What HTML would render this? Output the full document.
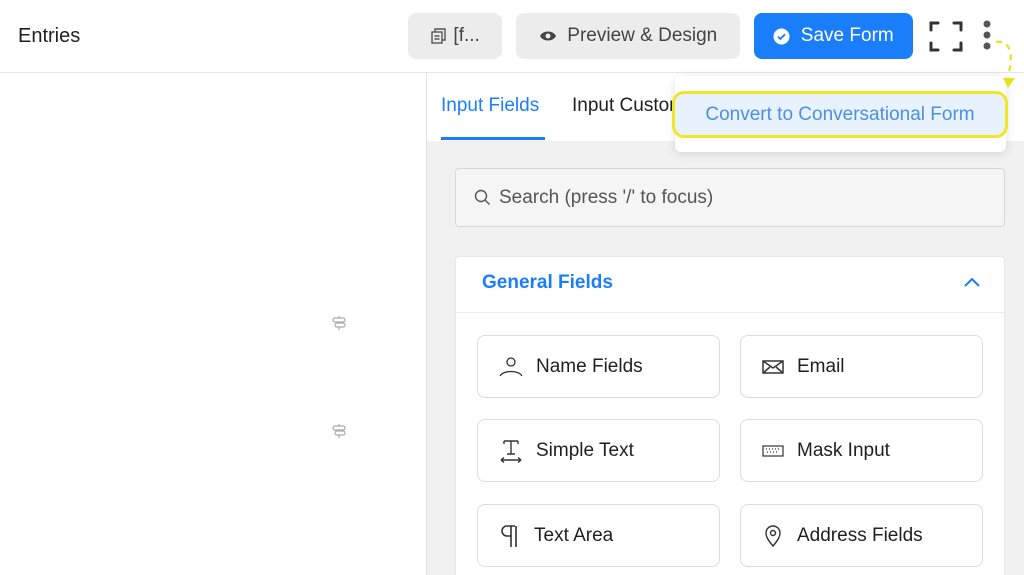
<!DOCTYPE html>
<html><head><style>
*{box-sizing:border-box;margin:0;padding:0}
html,body{width:1024px;height:575px;overflow:hidden}
body{font-family:"Liberation Sans",sans-serif;background:#fff;position:relative;color:#1e1f21}
.a{position:absolute}
.hb{position:absolute;top:13px;height:46px;border-radius:8px;background:#ececec;display:flex;align-items:center;justify-content:center;font-size:19px;color:#444}
.card{position:absolute;width:243px;height:63px;border:1px solid #dcdcdc;border-radius:8px;background:#fff;display:flex;align-items:center;font-size:19px;color:#1e1f21}
.card svg{margin-left:21px;margin-right:13px}
</style></head><body>
<div class="a" style="left:18px;top:25px;font-size:20px;color:#1e1f21">Entries</div>
<div class="hb" style="left:408px;width:94px"><svg width="18" height="18" viewBox="0 0 18 18" fill="none" stroke="#555" stroke-width="1.4"><rect x="2" y="5" width="10" height="11"/><path d="M5 5V2h10v11h-3M4.5 9h5M4.5 12h5"/></svg>&nbsp;[f...</div>
<div class="hb" style="left:516px;width:224px"><svg width="18" height="14" viewBox="0 0 18 14"><path d="M1 7C4 1 14 1 17 7C14 13 4 13 1 7Z" fill="#444"/><circle cx="9" cy="7" r="2.5" fill="#ececec"/></svg>&nbsp;&nbsp;Preview &amp; Design</div>
<div class="hb" style="left:754px;width:159px;background:#1a7efb;color:#fff"><svg width="17" height="17" viewBox="0 0 17 17"><circle cx="8.5" cy="8.5" r="8" fill="#fff"/><path d="M5 8.7l2.4 2.3 4.6-4.8" stroke="#1a7efb" stroke-width="1.8" fill="none"/></svg>&nbsp;&nbsp;Save Form</div>
<svg class="a" style="left:929px;top:20px" width="34" height="33" viewBox="0 0 34 33" fill="none" stroke="#333" stroke-width="3" stroke-linecap="round"><path d="M2 10V3h7M25 3h7v7M32 23v7h-7M9 30H2v-7"/></svg>
<div class="a" style="left:0;top:72px;width:1024px;height:1px;background:#e6e6e6"></div>
<div class="a" style="left:426px;top:73px;width:1px;height:502px;background:#e2e2e2"></div>
<div class="a" style="left:427px;top:73px;width:597px;height:502px;background:#f1f1f1"></div>
<div class="a" style="left:427px;top:73px;width:597px;height:68px;background:#fff"></div>
<div class="a" style="left:441px;top:95px;font-size:19px;color:#1a7efb">Input Fields</div>
<div class="a" style="left:441px;top:137px;width:104px;height:3px;background:#1a7efb"></div>
<div class="a" style="left:572px;top:95px;font-size:19px;color:#1e1f21">Input Customization</div>
<div class="a" style="left:675px;top:76px;width:331px;height:76px;background:#fff;border-radius:6px;box-shadow:0 2px 10px rgba(0,0,0,.12)"></div>
<div class="a" style="left:672px;top:91px;width:336px;height:47px;border:3px solid #efe52a;border-radius:12px;background:#e8f2fd;font-size:19px;color:#4a90e2;display:flex;align-items:center;justify-content:center">Convert to Conversational Form</div>
<svg class="a" style="left:980px;top:20px;z-index:5" width="40" height="70" viewBox="0 0 40 70" fill="none"><circle cx="7" cy="4" r="3.5" fill="#555"/><circle cx="7" cy="15" r="3.5" fill="#555"/><circle cx="7" cy="26" r="3.5" fill="#555"/><path d="M16 22C28 20 34 30 29 52" stroke="#e8e020" stroke-width="2.2" stroke-dasharray="6 5"/><path d="M23 58l5 10 7-10z" fill="#e8e020"/></svg>
<svg class="a" style="left:332px;top:315px" width="14" height="16" viewBox="0 0 14 16" fill="none" stroke="#aaa" stroke-width="1.2"><rect x="1" y="3" width="12" height="4" rx="2"/><rect x="3" y="8" width="10" height="4" rx="2"/><path d="M7 1v2M7 12v3"/></svg>
<svg class="a" style="left:332px;top:423px" width="14" height="16" viewBox="0 0 14 16" fill="none" stroke="#aaa" stroke-width="1.2"><rect x="1" y="3" width="12" height="4" rx="2"/><rect x="3" y="8" width="10" height="4" rx="2"/><path d="M7 1v2M7 12v3"/></svg>
<div class="a" style="left:455px;top:168px;width:550px;height:59px;border:1px solid #d6d6d6;border-radius:4px;background:#f5f5f5;display:flex;align-items:center;font-size:19px;color:#555"><svg style="margin-left:18px;margin-right:8px" width="17" height="17" viewBox="0 0 17 17" fill="none" stroke="#555" stroke-width="1.4"><circle cx="7" cy="7" r="5.5"/><path d="M11 11l4.5 4.5"/></svg>Search (press '/' to focus)</div>
<div class="a" style="left:455px;top:256px;width:550px;height:330px;background:#fff;border:1px solid #e6e6e6;border-radius:4px"></div>
<div class="a" style="left:456px;top:312px;width:548px;height:1px;background:#ececec"></div>
<div class="a" style="left:482px;top:272px;font-size:19px;font-weight:bold;color:#1a7efb">General Fields</div>
<svg class="a" style="left:963px;top:277px" width="18" height="11" viewBox="0 0 18 11" fill="none" stroke="#1a7efb" stroke-width="2"><path d="M2 9l7-7 7 7"/></svg>
<div class="card" style="left:477px;top:335px"><svg width="24" height="20" viewBox="0 0 24 20" fill="none" stroke="#333" stroke-width="1.3"><circle cx="12" cy="5" r="4"/><path d="M1 19c3-6 19-6 22 0"/></svg>Name Fields</div>
<div class="card" style="left:740px;top:335px"><svg width="22" height="14" viewBox="0 0 22 14" fill="none" stroke="#333" stroke-width="1.5"><rect x="1" y="1" width="20" height="12"/><path d="M1 1l10 7 10-7M1 13l7-6M21 13l-7-6"/></svg>Email</div>
<div class="card" style="left:477px;top:419px"><svg width="24" height="24" viewBox="0 0 24 24" fill="none" stroke="#333" stroke-width="1.4"><path d="M5 2h14M5 2v3M19 2v3M12 2v13M8 15h8M2 21h20M2 21l3-2.5M2 21l3 2.5M22 21l-3-2.5M22 21l-3 2.5"/></svg>Simple Text</div>
<div class="card" style="left:740px;top:419px"><svg width="22" height="12" viewBox="0 0 22 12" fill="none" stroke="#333" stroke-width="1.2"><rect x="1" y="1" width="20" height="10"/><path d="M4 4h1M7 4h1M10 4h1M13 4h1M16 4h1M5 7h12" stroke-dasharray="1 2"/></svg>Mask Input</div>
<div class="card" style="left:477px;top:504px"><svg width="22" height="24" viewBox="0 0 22 24" fill="none" stroke="#333" stroke-width="1.6"><path d="M16 2H8a5 5 0 0 0 0 10h4M12 2v21M17 2v21"/></svg>Text Area</div>
<div class="card" style="left:740px;top:504px"><svg width="22" height="22" viewBox="0 0 22 22" fill="none" stroke="#333" stroke-width="1.4"><path d="M11 21C5 14 4 11 4 8a7 7 0 0 1 14 0c0 3-1 6-7 13z"/><circle cx="11" cy="8" r="2.5"/></svg>Address Fields</div>
</body></html>
